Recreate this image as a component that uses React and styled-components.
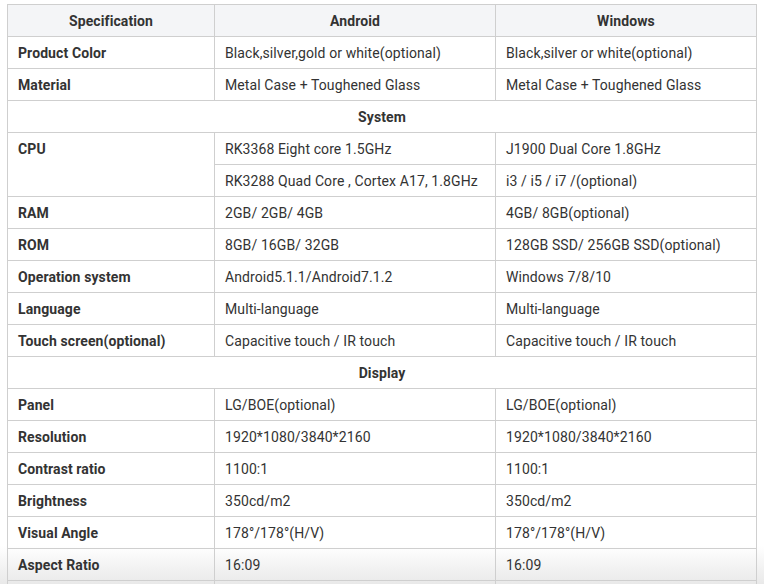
import styled, { createGlobalStyle } from 'styled-components';

const GlobalStyle = createGlobalStyle`
  html, body {
    margin: 0;
    padding: 0;
    background: #fff;
    overflow: hidden;
  }
`;

const specs = [
  { label: 'Product Color', android: 'Black,silver,gold or white(optional)', windows: 'Black,silver or white(optional)' },
  { label: 'Material', android: 'Metal Case + Toughened Glass', windows: 'Metal Case + Toughened Glass' },
  { section: 'System' },
  {
    label: 'CPU',
    rows: [
      ['RK3368 Eight core 1.5GHz', 'J1900 Dual Core 1.8GHz'],
      ['RK3288 Quad Core , Cortex A17, 1.8GHz', 'i3 / i5 / i7 /(optional)'],
    ],
  },
  { label: 'RAM', android: '2GB/ 2GB/ 4GB', windows: '4GB/ 8GB(optional)' },
  { label: 'ROM', android: '8GB/ 16GB/ 32GB', windows: '128GB SSD/ 256GB SSD(optional)' },
  { label: 'Operation system', android: 'Android5.1.1/Android7.1.2', windows: 'Windows 7/8/10' },
  { label: 'Language', android: 'Multi-language', windows: 'Multi-language' },
  { label: 'Touch screen(optional)', android: 'Capacitive touch / IR touch', windows: 'Capacitive touch / IR touch' },
  { section: 'Display' },
  { label: 'Panel', android: 'LG/BOE(optional)', windows: 'LG/BOE(optional)' },
  { label: 'Resolution', android: '1920*1080/3840*2160', windows: '1920*1080/3840*2160' },
  { label: 'Contrast ratio', android: '1100:1', windows: '1100:1' },
  { label: 'Brightness', android: '350cd/m2', windows: '350cd/m2' },
  { label: 'Visual Angle', android: '178°/178°(H/V)', windows: '178°/178°(H/V)' },
  { label: 'Aspect Ratio', android: '16:09', windows: '16:09' },
];

const App = () => {
  return (
    <Page>
      <GlobalStyle />
      <SpecTable>
        <colgroup>
          <col style={{ width: 207 }} />
          <col style={{ width: 281 }} />
          <col />
        </colgroup>
        <thead>
          <tr>
            <HeadCell>Specification</HeadCell>
            <HeadCell>Android</HeadCell>
            <HeadCell>Windows</HeadCell>
          </tr>
        </thead>
        <tbody>
          {specs.map((item, i) => {
            if (item.section) {
              return (
                <tr key={i}>
                  <SectionCell colSpan={3}>{item.section}</SectionCell>
                </tr>
              );
            }
            if (item.rows) {
              return item.rows.map((r, j) => (
                <tr key={`${i}-${j}`}>
                  {j === 0 && (
                    <LabelCell rowSpan={item.rows.length} $top>
                      {item.label}
                    </LabelCell>
                  )}
                  <Cell>{r[0]}</Cell>
                  <Cell>{r[1]}</Cell>
                </tr>
              ));
            }
            return (
              <tr key={i}>
                <LabelCell>{item.label}</LabelCell>
                <Cell>{item.android}</Cell>
                <Cell>{item.windows}</Cell>
              </tr>
            );
          })}
          <tr>
            <LabelCell>&nbsp;</LabelCell>
            <Cell>&nbsp;</Cell>
            <Cell>&nbsp;</Cell>
          </tr>
        </tbody>
      </SpecTable>
    </Page>
  );
};

const Page = styled.div`
  width: 764px;
  height: 584px;
  overflow: hidden;
  padding: 4px 7px 0;
  box-sizing: border-box;
  background: linear-gradient(#fff 0, #fff 546px, #e9e9e9 584px);
  font-family: Roboto, 'Liberation Sans', sans-serif;
  font-size: 14px;
  color: #333;
`;

const SpecTable = styled.table`
  width: 750px;
  border-collapse: collapse;
  table-layout: fixed;
`;

const BaseCell = styled.td`
  border: 1px solid #cfcfcf;
  height: 32px;
  padding: 0 10px;
  line-height: 20px;
  box-sizing: border-box;
  text-align: left;
  white-space: nowrap;
  letter-spacing: 0.1px;
`;

const HeadCell = styled(BaseCell).attrs({ as: 'th' })`
  background: #f4f5f7;
  font-weight: 700;
  text-align: center;
`;

const SectionCell = styled(BaseCell)`
  font-weight: 700;
  text-align: center;
`;

const LabelCell = styled(BaseCell)`
  font-weight: 700;
  vertical-align: ${props => (props.$top ? 'top' : 'middle')};
  padding-top: ${props => (props.$top ? '6px' : '0')};
`;

const Cell = styled(BaseCell)``;

export default App;
